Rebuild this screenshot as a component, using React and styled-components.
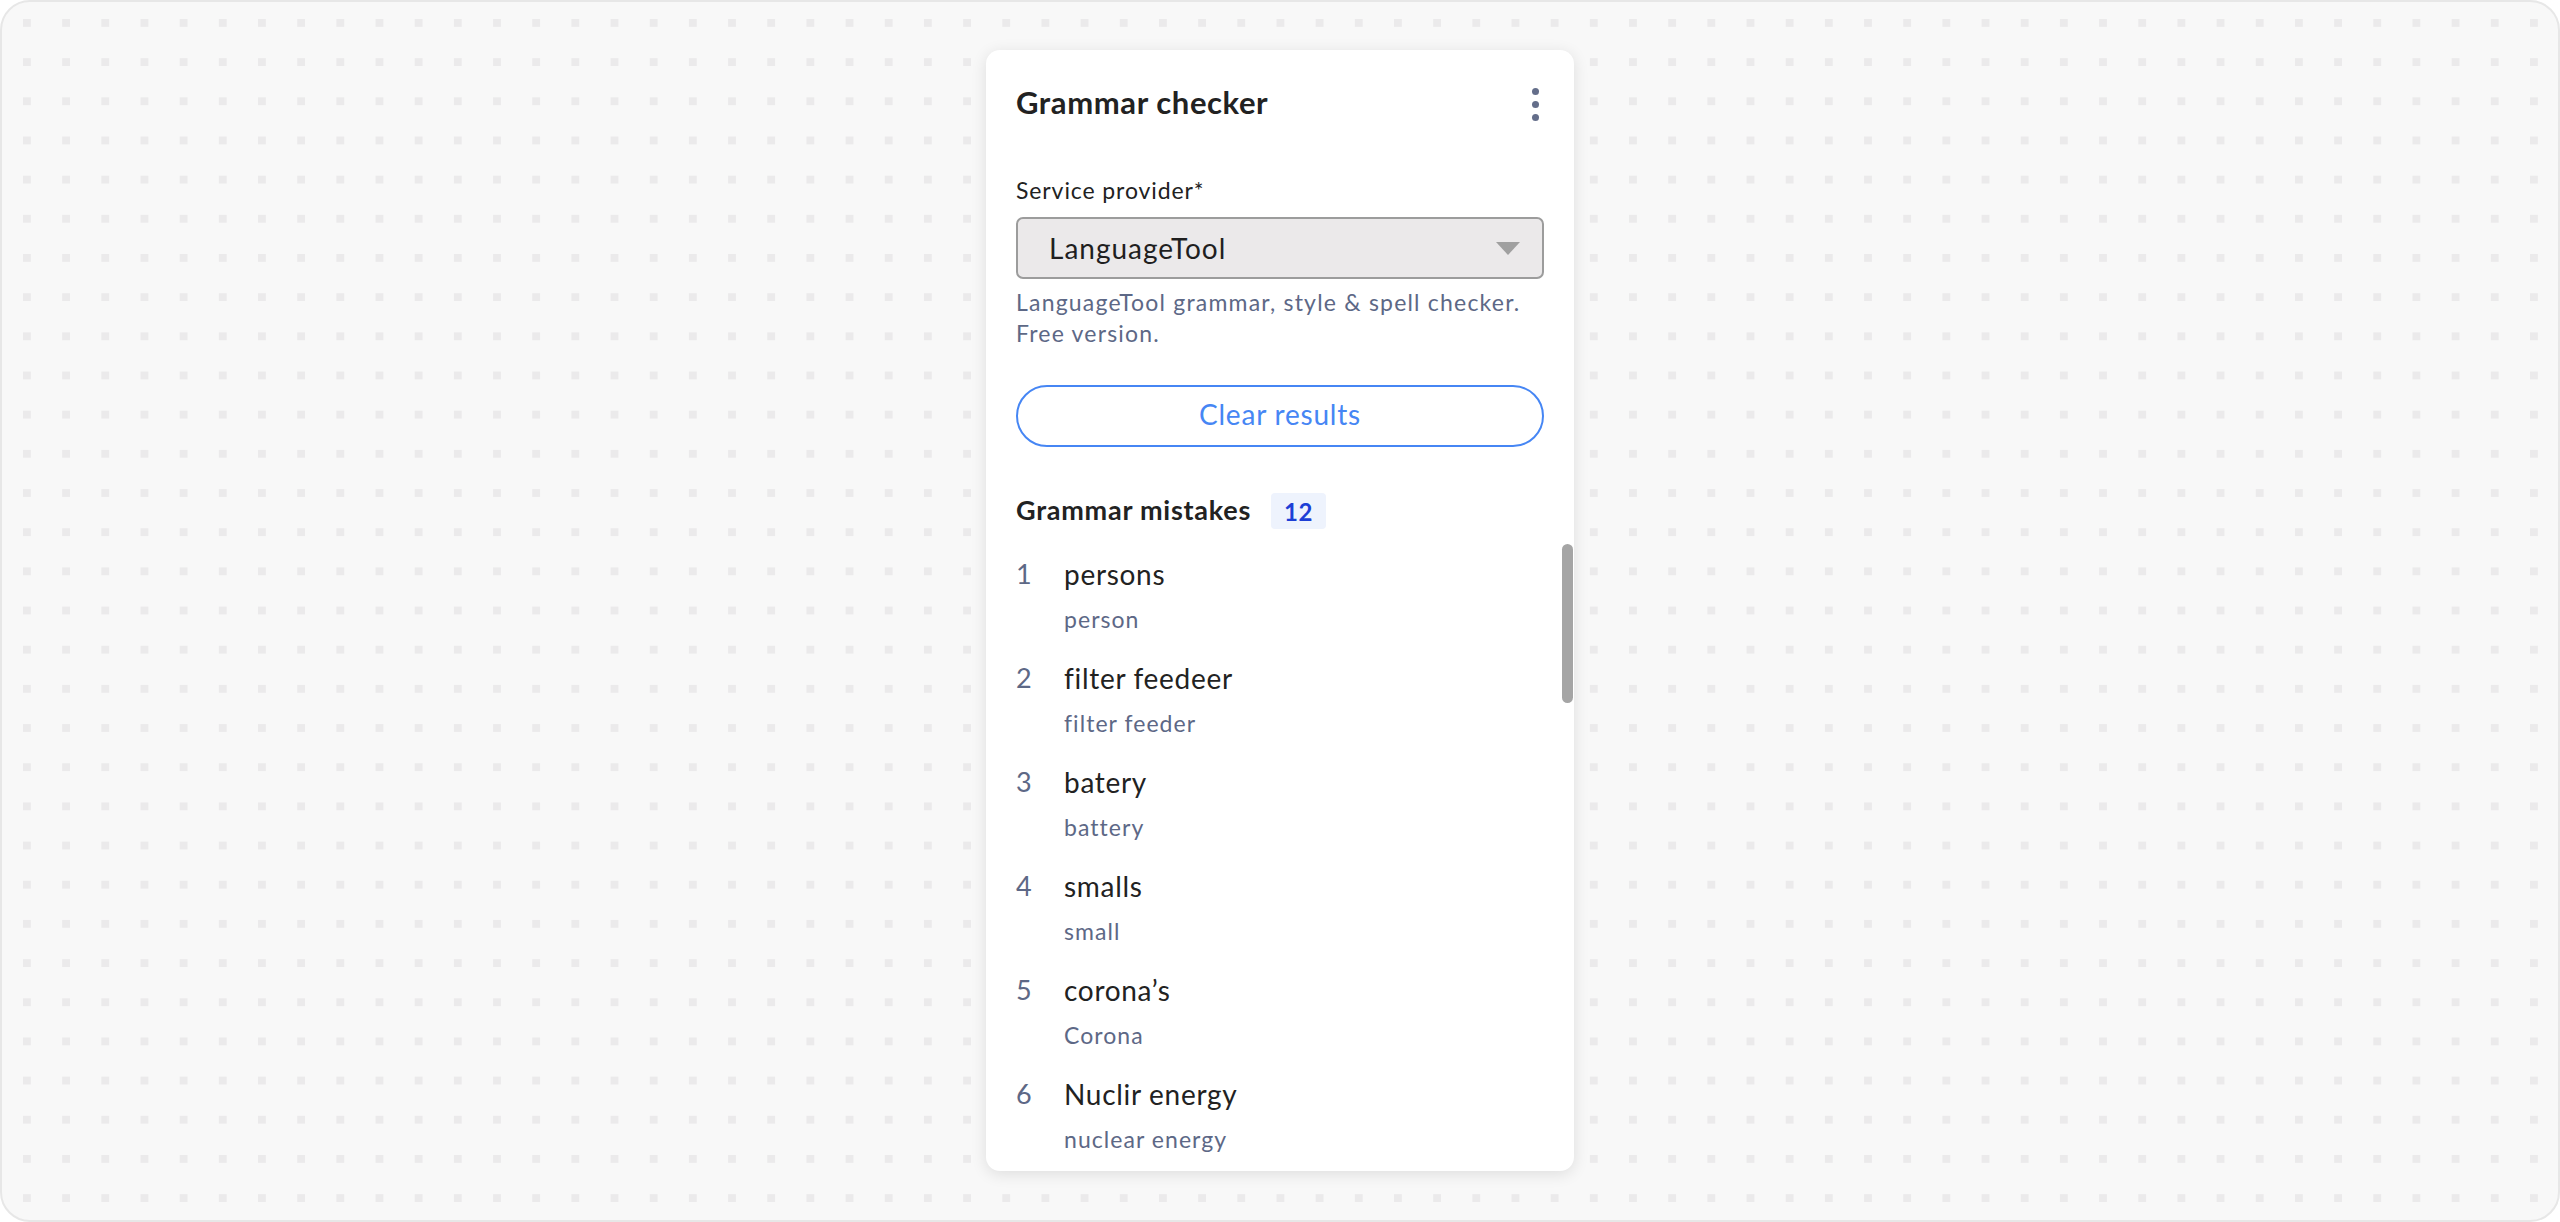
import React from "react"
import styled, { createGlobalStyle } from "styled-components"

const GlobalStyle = createGlobalStyle`
  html, body {
    margin: 0;
    padding: 0;
    background: #ffffff;
  }
  * {
    box-sizing: border-box;
  }
`

const Canvas = styled.div`
  height: 1222px;
  padding-top: 48px;
  border: 2px solid #e7e7e7;
  border-radius: 30px;
  background-color: #ebeaeb;
  background-image: linear-gradient(90deg, transparent 8px, #f8f8f8 8px),
    linear-gradient(180deg, transparent 8px, #f8f8f8 8px);
  background-size: 39.18px 39.18px;
  background-position: 21px 17px;
  display: flex;
  justify-content: center;
  align-items: flex-start;
  font-family: Lato, "Noto Sans", sans-serif;
`

const Panel = styled.section`
  position: relative;
  width: 588px;
  height: 1121px;
  padding: 0 30px;
  overflow: hidden;
  background: #ffffff;
  border-radius: 14px;
  box-shadow: 0 3px 16px rgba(0, 0, 0, 0.11);
`

const Header = styled.header`
  height: 107px;
  padding-bottom: 3px;
  display: flex;
  align-items: center;
  justify-content: space-between;
`

const Title = styled.h1`
  margin: 0;
  font-size: 31px;
  font-weight: 700;
  letter-spacing: 0.6px;
  color: #222222;
`

const MenuButton = styled.button`
  display: flex;
  flex-direction: column;
  gap: 6px;
  padding: 0;
  margin: 4px 5px 0 0;
  border: none;
  background: none;
  cursor: pointer;

  span {
    width: 7px;
    height: 7px;
    border-radius: 50%;
    background: #646e8a;
  }
`

const Label = styled.label`
  display: block;
  margin-top: 19px;
  font-size: 23px;
  line-height: 28px;
  letter-spacing: 0.9px;
  color: #222222;
`

const Select = styled.div`
  margin-top: 13px;
  height: 62px;
  padding: 0 22px 0 31px;
  display: flex;
  align-items: center;
  justify-content: space-between;
  background: #ebe9ea;
  border: 2px solid #9c9c9c;
  border-radius: 7px;
  font-size: 28px;
  letter-spacing: 1px;
  color: #1f1f1f;
`

const Caret = styled.span`
  width: 0;
  height: 0;
  border-left: 12px solid transparent;
  border-right: 12px solid transparent;
  border-top: 13px solid #a0a0a0;
`

const Hint = styled.p`
  margin: 8px 0 0;
  font-size: 23px;
  line-height: 31px;
  letter-spacing: 1.2px;
  color: #5d6886;
`

const OutlineButton = styled.button`
  display: block;
  width: 100%;
  height: 62px;
  margin-top: 36px;
  padding: 0 0 5px;
  border: 2px solid #4686f4;
  border-radius: 31px;
  background: #ffffff;
  color: #4686f4;
  font-family: inherit;
  font-size: 28px;
  letter-spacing: 0.8px;
  cursor: pointer;
`

const SectionHead = styled.div`
  margin-top: 46px;
  height: 36px;
  display: flex;
  align-items: center;
  gap: 20px;
`

const SectionTitle = styled.h2`
  margin: 0 0 3px;
  font-size: 27px;
  font-weight: 700;
  letter-spacing: 0.75px;
  color: #222222;
`

const Badge = styled.span`
  height: 36px;
  padding: 0 13px;
  display: inline-flex;
  align-items: center;
  background: #eef3fd;
  border-radius: 4px;
  color: #1d3fd6;
  font-size: 24px;
  font-weight: 700;
  letter-spacing: 0.5px;
`

const Mistakes = styled.ol`
  list-style: none;
  margin: 27px 0 0;
  padding: 0;
  display: flex;
  flex-direction: column;
  gap: 26px;
`

const Mistake = styled.li`
  display: grid;
  grid-template-columns: 48px 1fr;
  row-gap: 12px;
`

const Index = styled.span`
  font-size: 27px;
  line-height: 36px;
  color: #5d6886;
`

const Word = styled.span`
  font-size: 28px;
  line-height: 36px;
  letter-spacing: 0.7px;
  color: #222222;
`

const Fix = styled.span`
  grid-column: 2;
  font-size: 23px;
  line-height: 30px;
  letter-spacing: 1.05px;
  color: #5d6886;
`

const ScrollThumb = styled.div`
  position: absolute;
  top: 494px;
  right: 1px;
  width: 11px;
  height: 159px;
  border-radius: 6px;
  background: #a5a5a5;
`

const mistakes = [
  { word: "persons", fix: "person" },
  { word: "filter feedeer", fix: "filter feeder" },
  { word: "batery", fix: "battery" },
  { word: "smalls", fix: "small" },
  { word: "corona’s", fix: "Corona" },
  { word: "Nuclir energy", fix: "nuclear energy" },
]

const App = () => {
  return (
    <>
      <GlobalStyle />
      <Canvas>
        <Panel>
          <Header>
            <Title>Grammar checker</Title>
            <MenuButton aria-label="More">
              <span />
              <span />
              <span />
            </MenuButton>
          </Header>

          <Label>Service provider*</Label>
          <Select>
            LanguageTool
            <Caret />
          </Select>
          <Hint>
            LanguageTool grammar, style &amp; spell checker.
            <br />
            Free version.
          </Hint>

          <OutlineButton>Clear results</OutlineButton>

          <SectionHead>
            <SectionTitle>Grammar mistakes</SectionTitle>
            <Badge>12</Badge>
          </SectionHead>

          <Mistakes>
            {mistakes.map((m, i) => (
              <Mistake key={m.word}>
                <Index>{i + 1}</Index>
                <Word>{m.word}</Word>
                <Fix>{m.fix}</Fix>
              </Mistake>
            ))}
          </Mistakes>

          <ScrollThumb />
        </Panel>
      </Canvas>
    </>
  )
}

export default App
